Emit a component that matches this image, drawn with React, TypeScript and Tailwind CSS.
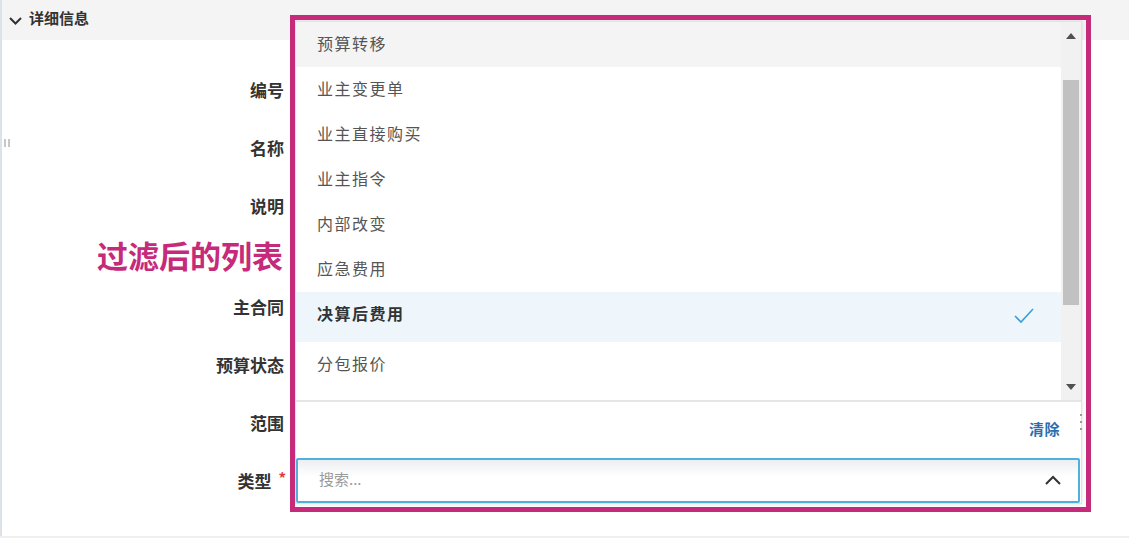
import React from "react";

const font = { fontFamily: '"Noto Sans CJK SC", "Noto Sans", sans-serif' };

const items = [
  { t: "预算转移", kind: "hover" },
  { t: "业主变更单" },
  { t: "业主直接购买" },
  { t: "业主指令" },
  { t: "内部改变" },
  { t: "应急费用" },
  { t: "决算后费用", kind: "selected" },
  { t: "分包报价" },
];

function Label({ text, req }: { text: string; req?: boolean }) {
  return (
    <div className="h-[58px] w-[284px] flex items-center justify-end pb-[3px]">
      <span className="text-[17px] font-bold text-[#333]">{text}</span>
      {req && <span className="text-[#e53935] text-[15px] font-bold ml-[6px] -mt-[4px]">*</span>}
    </div>
  );
}

export default function App() {
  return (
    <div style={font} className="relative w-[1129px] h-[538px] bg-white overflow-hidden">
      {/* left rule */}
      <div className="absolute left-0 top-0 bottom-0 w-[2px] bg-[#dde2e8]" />

      {/* header */}
      <div className="h-[40px] bg-[#f4f4f4] flex items-center pl-[8px] gap-[6px]">
        <svg width="15" height="10" viewBox="0 0 15 10" className="mt-[1px]">
          <polyline points="2,2 7.5,7.5 13,2" fill="none" stroke="#333" strokeWidth="2" />
        </svg>
        <span className="text-[15px] font-bold text-[#333] -mt-[3px]">详细信息</span>
      </div>

      {/* form labels */}
      <div className="flex flex-col pt-[22px]">
        <Label text="编号" />
        <Label text="名称" />
        <Label text="说明" />
        <div className="h-[43px]" />
        <Label text="主合同" />
        <Label text="预算状态" />
        <Label text="范围" />
        <div className="h-[58px] w-[286px] flex items-center justify-end pb-[3px]">
          <span className="text-[17px] font-bold text-[#333]">类型</span>
          <span className="text-[#e53935] text-[15px] font-bold ml-[7px] -mt-[4px]">*</span>
        </div>
      </div>

      {/* drag handle */}
      <div className="absolute left-[4px] top-[139px] flex gap-[2px]">
        <div className="w-[2px] h-[8px] bg-[#c8c8c8]" />
        <div className="w-[2px] h-[8px] bg-[#c8c8c8]" />
      </div>

      {/* bottom rule */}
      <div className="absolute left-0 right-0 bottom-0 h-[2px] bg-[#efefef]" />

      {/* annotation label */}
      <div className="absolute left-[97px] top-[235px] text-[31px] font-bold text-[#c62a7b] leading-[40px]">
        过滤后的列表
      </div>

      {/* dropdown */}
      <div className="absolute left-[295px] top-[21px] w-[787px] bg-white border border-[#dde3ea] shadow-[0_0_4px_rgba(0,0,0,0.12)] flex flex-col">
        <div className="h-[378px] flex overflow-hidden">
          <div className="flex-1 flex flex-col">
            {items.map((it) => (
              <div
                key={it.t}
                className={
                  it.kind === "hover"
                    ? "h-[45px] shrink-0 flex items-center pl-[21px] pb-[3px] bg-[#f4f4f4] text-[#555]"
                    : it.kind === "selected"
                    ? "h-[50px] shrink-0 flex items-center justify-between pl-[21px] pr-[26px] pb-[8px] bg-[#eef6fc] text-[#333] font-bold"
                    : "h-[45px] shrink-0 flex items-center pl-[21px] pb-[3px] text-[#555]"
                }
              >
                <span className="text-[16px] tracking-[1.5px]">{it.t}</span>
                {it.kind === "selected" && (
                  <svg width="22" height="18" viewBox="0 0 22 18" className="mt-[6px]">
                    <polyline points="2,9 8,15 20,2" fill="none" stroke="#3a9fd6" strokeWidth="1.6" />
                  </svg>
                )}
              </div>
            ))}
          </div>
          <div className="w-[20px] bg-[#f1f1f1] relative">
            <svg width="10" height="6" viewBox="0 0 10 6" className="absolute left-[5px] top-[11px]">
              <polygon points="0,6 5,0 10,6" fill="#505050" />
            </svg>
            <div className="absolute left-[2px] right-[2px] top-[58px] h-[225px] bg-[#c1c1c1]" />
            <svg width="10" height="6" viewBox="0 0 10 6" className="absolute left-[5px] bottom-[10px]">
              <polygon points="0,0 10,0 5,6" fill="#505050" />
            </svg>
          </div>
        </div>
        <div className="h-[58px] border-t-2 border-[#e6e6e6] flex items-center justify-end pr-[21px] pb-[2px]">
          <span className="text-[15px] font-bold text-[#2a6db0] tracking-[0.5px]">清除</span>
        </div>
        <div className="h-[45px] mr-[1px] border-2 border-[#4fb0da] rounded-[2px] flex items-center justify-between pl-[21px] pr-[16px] bg-[linear-gradient(#eceef1,#ffffff_40%)]">
          <span className="text-[15px] text-[#9a9a9a] -mt-[2px]">搜索...</span>
          <svg width="18" height="11" viewBox="0 0 18 11">
            <polyline points="2,9 9,2 16,9" fill="none" stroke="#333" strokeWidth="2" />
          </svg>
        </div>
      </div>

      {/* vertical dots */}
      <div className="absolute left-[1080px] top-[414px] flex flex-col gap-[5px]">
        <div className="w-[2px] h-[2px] bg-[#999]" />
        <div className="w-[2px] h-[2px] bg-[#999]" />
        <div className="w-[2px] h-[2px] bg-[#999]" />
      </div>

      {/* annotation box */}
      <div className="absolute left-[290px] top-[15px] w-[801px] h-[497px] border-[5px] border-[#c62a7b] pointer-events-none" />
    </div>
  );
}
